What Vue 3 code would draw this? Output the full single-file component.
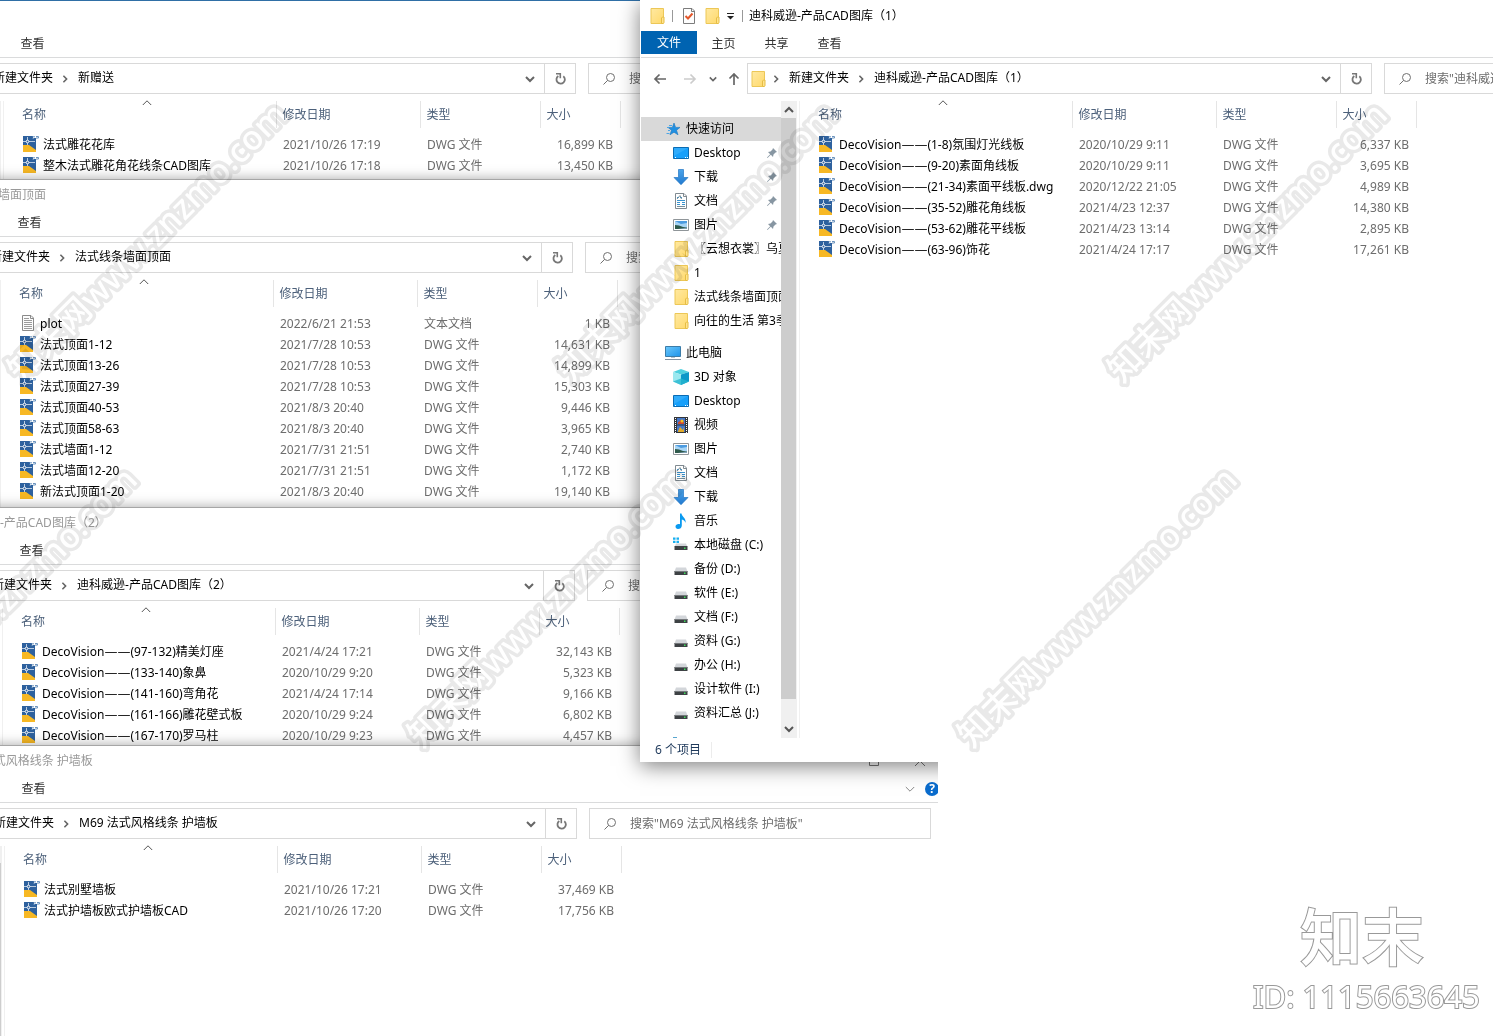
<script setup>
const dwg = (name, date, size) => ({ name, date, size, type: 'DWG 文件', icon: 'dwg' })

const windows = [
  {
    id: 'gift', left: -156, top: 0, folder: '新赠送', accent: true,
    files: [
      dwg('法式雕花花库', '2021/10/26 17:19', '16,899 KB'),
      dwg('整木法式雕花角花线条CAD图库', '2021/10/26 17:18', '13,450 KB'),
    ],
  },
  {
    id: 'ceiling', left: -159, top: 179, folder: '法式线条墙面顶面', title: true,
    files: [
      { name: 'plot', date: '2022/6/21 21:53', size: '1 KB', type: '文本文档', icon: 'txt' },
      dwg('法式顶面1-12', '2021/7/28 10:53', '14,631 KB'),
      dwg('法式顶面13-26', '2021/7/28 10:53', '14,899 KB'),
      dwg('法式顶面27-39', '2021/7/28 10:53', '15,303 KB'),
      dwg('法式顶面40-53', '2021/8/3 20:40', '9,446 KB'),
      dwg('法式顶面58-63', '2021/8/3 20:40', '3,965 KB'),
      dwg('法式墙面1-12', '2021/7/31 21:51', '2,740 KB'),
      dwg('法式墙面12-20', '2021/7/31 21:51', '1,172 KB'),
      dwg('新法式顶面1-20', '2021/8/3 20:40', '19,140 KB'),
    ],
  },
  {
    id: 'deco2', left: -157, top: 507, folder: '迪科威逊-产品CAD图库（2）', title: true,
    files: [
      dwg('DecoVision——(97-132)精美灯座', '2021/4/24 17:21', '32,143 KB'),
      dwg('DecoVision——(133-140)象鼻', '2020/10/29 9:20', '5,323 KB'),
      dwg('DecoVision——(141-160)弯角花', '2021/4/24 17:14', '9,166 KB'),
      dwg('DecoVision——(161-166)雕花壁式板', '2020/10/29 9:24', '6,802 KB'),
      dwg('DecoVision——(167-170)罗马柱', '2020/10/29 9:23', '4,457 KB'),
    ],
  },
  {
    id: 'm69', left: -155, top: 745, folder: 'M69 法式风格线条 护墙板', title: true, controls: true, thumb: true,
    files: [
      dwg('法式别墅墙板', '2021/10/26 17:21', '37,469 KB'),
      dwg('法式护墙板欧式护墙板CAD', '2021/10/26 17:20', '17,756 KB'),
    ],
  },
  {
    id: 'deco1', left: 640, top: 0, folder: '迪科威逊-产品CAD图库（1）', title: true, active: true, thumb: true,
    files: [
      dwg('DecoVision——(1-8)氛围灯光线板', '2020/10/29 9:11', '6,337 KB'),
      dwg('DecoVision——(9-20)素面角线板', '2020/10/29 9:11', '3,695 KB'),
      dwg('DecoVision——(21-34)素面平线板.dwg', '2020/12/22 21:05', '4,989 KB'),
      dwg('DecoVision——(35-52)雕花角线板', '2021/4/23 12:37', '14,380 KB'),
      dwg('DecoVision——(53-62)雕花平线板', '2021/4/23 13:14', '2,895 KB'),
      dwg('DecoVision——(63-96)饰花', '2021/4/24 17:17', '17,261 KB'),
    ],
  },
]

const layers = [
  { id: 'back', windows: windows.filter((w) => !w.active) },
  { id: 'front', windows: windows.filter((w) => w.active) },
]

const navGroups = [
  {
    label: '快速访问', icon: 'star', selected: true,
    items: [
      { label: 'Desktop', icon: 'desktop', pin: true },
      { label: '下载', icon: 'download', pin: true },
      { label: '文档', icon: 'document', pin: true },
      { label: '图片', icon: 'picture', pin: true },
      { label: '〖云想衣裳〗乌夏', icon: 'folder' },
      { label: '1', icon: 'folder' },
      { label: '法式线条墙面顶面', icon: 'folder' },
      { label: '向往的生活 第3季', icon: 'folder' },
    ],
  },
  {
    label: '此电脑', icon: 'pc',
    items: [
      { label: '3D 对象', icon: 'cube' },
      { label: 'Desktop', icon: 'desktop' },
      { label: '视频', icon: 'video' },
      { label: '图片', icon: 'picture' },
      { label: '文档', icon: 'document' },
      { label: '下载', icon: 'download' },
      { label: '音乐', icon: 'music' },
      { label: '本地磁盘 (C:)', icon: 'sysdrive' },
      { label: '备份 (D:)', icon: 'drive' },
      { label: '软件 (E:)', icon: 'drive' },
      { label: '文档 (F:)', icon: 'drive' },
      { label: '资料 (G:)', icon: 'drive' },
      { label: '办公 (H:)', icon: 'drive' },
      { label: '设计软件 (I:)', icon: 'drive' },
      { label: '资料汇总 (J:)', icon: 'drive' },
    ],
  },
]

const watermarks = [
  [22, 384], [572, 384], [1122, 384],
  [-128, 749], [422, 749], [972, 749],
]

const nameParts = (name) => name.split(/(——)/)
</script>

<template>
  <main class="desktop">
    <svg class="defs" aria-hidden="true">
      <linearGradient id="g-folder" x1="0" y1="0" x2="1" y2="1"><stop offset="0" stop-color="#ffe9a2" /><stop offset="1" stop-color="#ffd96b" /></linearGradient>
      <linearGradient id="g-screen" x1="0" y1="0" x2="1" y2="1"><stop offset="0" stop-color="#6cc8fb" /><stop offset="1" stop-color="#1c93ea" /></linearGradient>
      <linearGradient id="g-arrow" x1="0" y1="0" x2="0" y2="1"><stop offset="0" stop-color="#4ba4ea" /><stop offset="1" stop-color="#2179cf" /></linearGradient>
      <symbol id="i-dwg" viewBox="0 0 16 16">
        <path d="M0 0H13V16H0Z" fill="#2e619e" />
        <path d="M0 9H6L13 14V16H0Z" fill="#f7b824" />
        <path d="M8 0H13V3L16 2V1H14V0Z" fill="#e9f0f7" />
        <path d="M10 0H16V2H10Z" fill="#fff" />
        <path d="M9.500 .8H12M13 .5H15.500V2H13M9.500 2.500H11" stroke="#6d94bf" fill="none" />
        <path d="M0 5.500H3.200M6 5.500H12M4.500 1V4M4.500 7V9" stroke="#b9cbe0" fill="none" />
        <circle cx="4.500" cy="5.500" r="1.300" fill="#2e619e" stroke="#fff" />
      </symbol>
      <symbol id="i-txt" viewBox="0 0 16 16">
        <path d="M2.500.5H11L13.500 3V15.500H2.500Z" fill="#fcfcfc" stroke="#8b8b8b" />
        <path d="M10.500.5V3.500H13.500" fill="none" stroke="#8b8b8b" />
        <path d="M4 3.500H9M4 5.500H12M4 7.500H12M4 9.500H12M4 11.500H12M4 13.500H12" stroke="#9b9b9b" />
      </symbol>
      <symbol id="i-folder" viewBox="0 0 16 16">
        <path d="M2 .5H14.500V15.500H2Z" fill="url(#g-folder)" stroke="#ecc757" />
        <path d="M12.500 15.500V10L13.500 9H15V14.500L14 15.500Z" fill="#ffe48e" stroke="#e6bd45" />
      </symbol>
      <symbol id="i-star" viewBox="0 0 16 16">
        <path d="M9 2L10.600 6.400H15L11.500 9.200L13 13.800L9 11.200L5 13.800L6.500 9.200L3 6.400H7.400Z" fill="#2090e2" stroke="#1b76bd" stroke-width=".6" />
        <path d="M4 4.500H7M2 6.500H4M3 9.500H5M1.500 12.500H4.500" stroke="#4aa6e8" />
      </symbol>
      <symbol id="i-desktop" viewBox="0 0 16 16">
        <path d="M.5 2.500H15.500V13.500H.5Z" fill="#17a0fb" stroke="#0a6cb4" />
        <path d="M1 3H15L1 11Z" fill="#3fb2fb" opacity=".6" />
        <path d="M2 12.500H3M12 12.500H13M14 12.500H15" stroke="#fff" />
      </symbol>
      <symbol id="i-download" viewBox="0 0 16 16">
        <path d="M5.500.5H10.500V8.500H15L8 15.700L1 8.500H5.500Z" fill="url(#g-arrow)" stroke="#2377c4" stroke-width=".7" />
      </symbol>
      <symbol id="i-document" viewBox="0 0 16 16">
        <path d="M2.500.5H11L13.500 3V15.500H2.500Z" fill="#fff" stroke="#808a91" />
        <path d="M10.500.5V3.500H13.500" fill="none" stroke="#808a91" />
        <path d="M4 4.500H6M7 4.500H9M4 7.500H12M4 9.500H7M9 9.500H12M4 11.500H7M9 11.500H12" stroke="#3a94cf" />
        <path d="M4 6L7 2.500L8.500 6M4 13.500H12" stroke="#78909c" fill="none" />
      </symbol>
      <symbol id="i-picture" viewBox="0 0 16 16">
        <path d="M.5 2.500H15.500V13.500H.5Z" fill="#fff" stroke="#8f9599" />
        <path d="M2 4H14V12H2Z" fill="#a7d4f5" />
        <path d="M2 4H14V6L8 7Z" fill="#4c9be0" />
        <path d="M2 8L6 8.500L10 10L14 10.500V12H2Z" fill="#2e5a4b" />
        <path d="M5 12L14 10.500V12Z" fill="#7fa0b4" />
      </symbol>
      <symbol id="i-pc" viewBox="0 0 16 16">
        <path d="M.5 1.500H15.500V11.500H.5Z" fill="url(#g-screen)" stroke="#3c7ca8" />
        <path d="M6 12H10V13H6Z" fill="#b4c4d0" />
        <path d="M0 14.500H16" stroke="#8293a3" />
      </symbol>
      <symbol id="i-cube" viewBox="0 0 16 16">
        <path d="M0 3L8 0L16 3L8 5.500Z" fill="#4fd0de" />
        <path d="M0 3L8 5.500V16L0 12.500Z" fill="#9be8ef" />
        <path d="M16 3L8 5.500V16L16 12.500Z" fill="#0d98c8" />
        <path d="M0 12.500L8 9.500L16 12.500L8 16Z" fill="#25b7cf" opacity=".8" />
      </symbol>
      <symbol id="i-video" viewBox="0 0 16 16">
        <path d="M1 0H15V16H1Z" fill="#34363a" />
        <path d="M4 1H12V7.500H4ZM4 8.500H12V15H4Z" fill="#4577c8" />
        <path d="M5 5.500L8 3L11 5V7H5Z" fill="#d14a2e" />
        <circle cx="9" cy="4" r="1.500" fill="#f3c321" />
        <path d="M5 14L7 10L10 13L11 10V15H5Z" fill="#e2ab2b" />
        <path d="M2.500 1V16M13.500 1V16" stroke="#fff" stroke-dasharray="1 1" />
      </symbol>
      <symbol id="i-music" viewBox="0 0 16 16">
        <path d="M7 .5H8.500C9 4 13.500 5 12.500 10C12 8 11 7 8.800 6.500V12.500C8.800 15 7 16 5 16C3.500 16 2.500 15 2.500 13.600C2.500 11.500 5 10.500 7 11.300Z" fill="#0a9af0" />
      </symbol>
      <symbol id="i-drive" viewBox="0 0 16 16">
        <path d="M3 6.500H13L14.500 10.500H1.500Z" fill="#d3d6da" />
        <path d="M1.500 10H14.500V14H1.500Z" fill="#3d4144" />
        <path d="M1.500 10H14.500V11H1.500Z" fill="#74787b" />
        <path d="M11 11.500H12.500V13H11Z" fill="#3fe05b" />
      </symbol>
      <symbol id="i-sysdrive" viewBox="0 0 16 16">
        <path d="M0 .5H2.500V2.800H0ZM3.500.5H6V2.800H3.500ZM0 3.800H2.500V6H0ZM3.500 3.800H6V6H3.500Z" fill="#19aff0" />
        <path d="M3 6.500H13L14.500 10H1.500Z" fill="#d3d6da" />
        <path d="M1.500 9H14.500V13H1.500Z" fill="#3d4144" />
        <path d="M11 10.500H12.500V12H11Z" fill="#3fe05b" />
      </symbol>
      <symbol id="i-network" viewBox="0 0 16 16">
        <path d="M2 0H6V4H2Z" fill="#58a6cf" />
      </symbol>
      <symbol id="i-pin" viewBox="0 0 12 12">
        <path d="M7 1L11 5L9.500 5.500L7.500 7.500L7 10L4.800 7.800L1.500 11L1 10.500L4.200 7.200L2 5L4.500 4.500L6.500 2.500Z" fill="#8796a2" />
      </symbol>
      <symbol id="i-check" viewBox="0 0 16 16">
        <path d="M2.500.5H11L13.500 3V15.500H2.500Z" fill="#fdfdfd" stroke="#7c7c7c" />
        <path d="M10.500.5V3.500H13.500" fill="none" stroke="#7c7c7c" />
        <path d="M4.500 8L7 10.500L11.500 5.500" fill="none" stroke="#e3572b" stroke-width="2" />
      </symbol>
      <symbol id="i-customize" viewBox="0 0 8 8">
        <path d="M0 1.500H7" stroke="#222" /><path d="M0 4H7L3.500 7.500Z" fill="#222" />
      </symbol>
      <symbol id="i-back" viewBox="0 0 14 14">
        <path d="M13 7H2M6.500 2.500L2 7L6.500 11.500" fill="none" stroke="currentColor" stroke-width="1.700" />
      </symbol>
      <symbol id="i-chevron" viewBox="0 0 10 10">
        <path d="M1 3L5 7L9 3" fill="none" stroke="currentColor" stroke-width="2" />
      </symbol>
      <symbol id="i-thin" viewBox="0 0 10 10">
        <path d="M.8 3L5 7.200L9.200 3" fill="none" stroke="currentColor" />
      </symbol>
      <symbol id="i-refresh" viewBox="0 0 12 12">
        <path d="M9.300 3.200A4.200 4.200 0 1 1 4.300 3" fill="none" stroke="#777" stroke-width="1.800" />
        <path d="M2 .8H6.300V5.200" fill="none" stroke="#777" stroke-width="1.600" />
      </symbol>
      <symbol id="i-search" viewBox="0 0 12 12">
        <circle cx="7.500" cy="4.500" r="4" fill="none" stroke="#707070" /><path d="M4.600 7.400L.5 11.500" stroke="#707070" />
      </symbol>
    </svg>

    <div v-for="layer in layers" :key="layer.id" class="layer" :class="layer.id">
      <section
        v-for="win in layer.windows" :key="win.id"
        class="window" :class="{ active: win.active, accent: win.accent }"
        :style="{ left: win.left + 'px', top: win.top + 'px' }"
      >
        <header class="titlebar">
          <div v-if="win.active" class="quick">
            <svg class="ico"><use href="#i-folder" /></svg>
            <i class="bar"></i>
            <svg class="ico"><use href="#i-check" /></svg>
            <svg class="ico"><use href="#i-folder" /></svg>
            <svg class="ico8"><use href="#i-customize" /></svg>
            <i class="bar"></i>
          </div>
          <h2 v-if="win.title" class="title">{{ win.folder }}</h2>
          <div v-if="win.controls" class="caption">
            <button aria-label="Maximize"><svg width="10" height="10"><path d="M.5.5H9.500V9.500H.5Z" fill="none" stroke="#777" /></svg></button>
            <button aria-label="Close"><svg width="10" height="10"><path d="M0 0L10 10M10 0L0 10" stroke="#777" /></svg></button>
          </div>
        </header>

        <nav class="tabs">
          <template v-if="win.active">
            <button class="tab file">文件</button>
            <button class="tab">主页</button>
            <button class="tab">共享</button>
          </template>
          <button class="tab view">查看</button>
          <span v-if="win.controls" class="ribbon-end">
            <svg class="ico10"><use href="#i-thin" /></svg>
            <button class="help" aria-label="Help">?</button>
          </span>
        </nav>

        <div class="navbar">
          <div class="arrows">
            <template v-if="win.active">
              <button aria-label="Back"><svg class="ico14"><use href="#i-back" /></svg></button>
              <button class="off" aria-label="Forward"><svg class="ico14 flip"><use href="#i-back" /></svg></button>
              <button class="recent" aria-label="Recent"><svg class="ico8"><use href="#i-chevron" /></svg></button>
              <button aria-label="Up"><svg class="ico14 up"><use href="#i-back" /></svg></button>
            </template>
          </div>
          <div class="address">
            <svg v-if="win.active" class="ico addr-folder"><use href="#i-folder" /></svg>
            <svg v-if="win.active" class="ico8 right"><use href="#i-chevron" /></svg>
            <a class="crumb first" href="#">新建文件夹</a>
            <svg class="ico8 right"><use href="#i-chevron" /></svg>
            <a class="crumb" href="#">{{ win.folder }}</a>
            <button class="drop" aria-label="History"><svg class="ico10"><use href="#i-chevron" /></svg></button>
            <button class="refresh" aria-label="Refresh"><svg class="ico12"><use href="#i-refresh" /></svg></button>
          </div>
          <label class="search">
            <svg class="ico12"><use href="#i-search" /></svg>
            <input type="search" :placeholder="`搜索&quot;${win.folder}&quot;`" aria-label="搜索" />
          </label>
        </div>

        <div class="body">
          <aside class="pane">
            <div class="tree">
              <template v-if="win.active">
                <ul v-for="group in navGroups" :key="group.label">
                  <li class="root" :class="{ selected: group.selected }">
                    <svg class="ico"><use :href="'#i-' + group.icon" /></svg>{{ group.label }}
                  </li>
                  <li v-for="item in group.items" :key="item.label">
                    <svg class="ico"><use :href="'#i-' + item.icon" /></svg>{{ item.label }}
                    <svg v-if="item.pin" class="ico12 pin"><use href="#i-pin" /></svg>
                  </li>
                </ul>
                <svg class="ico net"><use href="#i-network" /></svg>
              </template>
            </div>
            <div class="scroll">
              <svg class="ico10 flip"><use href="#i-chevron" /></svg>
              <div v-if="win.thumb" class="thumb"></div>
              <svg v-if="win.active" class="ico10"><use href="#i-chevron" /></svg>
            </div>
          </aside>
          <table class="files">
            <colgroup><col class="c-name" /><col class="c-date" /><col class="c-type" /><col class="c-size" /></colgroup>
            <thead>
              <tr>
                <th scope="col">名称<svg class="ico10 sort"><use href="#i-thin" /></svg></th>
                <th scope="col">修改日期</th>
                <th scope="col">类型</th>
                <th scope="col">大小</th>
              </tr>
            </thead>
            <tbody>
              <tr v-for="file in win.files" :key="file.name">
                <td class="name">
                  <svg class="ico"><use :href="'#i-' + file.icon" /></svg>
                  <span v-for="(part, i) in nameParts(file.name)" :key="i" :class="{ dash: part === '——' }">{{ part }}</span>
                </td>
                <td>{{ file.date }}</td>
                <td>{{ file.type }}</td>
                <td class="size">{{ file.size }}</td>
              </tr>
            </tbody>
          </table>
        </div>

        <footer v-if="win.active" class="status"><span>6 个项目</span></footer>
      </section>
      <div v-if="layer.id === 'back'" class="cast"></div>
    </div>

    <svg class="marks" aria-hidden="true">
      <text v-for="([x, y], i) in watermarks" :key="i" :transform="`translate(${x} ${y}) rotate(-45)`">知末网www.znzmo.com</text>
    </svg>

    <div class="brand">
      <svg class="logo" viewBox="0 0 126 62"><text x="0" y="54">知末</text></svg>
      <svg class="code" viewBox="0 0 230 34"><text x="0" y="28">ID: 1115663645</text></svg>
    </div>
  </main>
</template>

<style>
body {
  background: #fff;
}
</style>

<style scoped>
.desktop {
  position: relative;
  height: 100vh;
  overflow: hidden;
  background: #fff;
  font-family: "Noto Sans", "Noto Sans CJK SC", sans-serif;
  font-size: 12px;
  line-height: 16px;
  color: #000;
}
.defs {
  position: absolute;
  width: 0;
  height: 0;
}
.layer {
  position: absolute;
  inset: 0;
  overflow: hidden;
}
.layer.back {
  right: auto;
  width: 938px;
}
.window {
  position: absolute;
  bottom: 0;
  display: flex;
  flex-direction: column;
  box-sizing: border-box;
  width: 1098px;
  border-top: 1px solid #a6a6a6;
  background: #fff;
  box-shadow: 0 0 12px rgba(0, 0, 0, .35);
}
.window.accent {
  border-top-color: #2f6fa6;
}
.window.active {
  bottom: auto;
  height: 762px;
  border-top-color: #fff;
  border-left: 1px solid #fff;
  box-shadow: none;
}
.cast {
  position: absolute;
  left: 640px;
  top: 0;
  width: 1098px;
  height: 762px;
  box-shadow: 0 4px 20px rgba(0, 0, 0, .5);
}
button {
  display: flex;
  align-items: center;
  justify-content: center;
  padding: 0;
  border: 0;
  background: none;
  font: inherit;
  color: inherit;
}
svg {
  display: block;
  flex: none;
}
.ico { width: 16px; height: 16px; }
.ico14 { width: 14px; height: 14px; }
.ico12 { width: 12px; height: 12px; }
.ico10 { width: 10px; height: 10px; }
.ico8 { width: 8px; height: 8px; }
.flip { transform: rotate(180deg); }
.up { transform: rotate(90deg); }
.right { transform: rotate(-90deg); color: #666; }

.titlebar {
  display: flex;
  align-items: center;
  height: 30px;
  padding-left: 109px;
}
.active .titlebar {
  padding-left: 8px;
}
.quick {
  display: flex;
  align-items: center;
  gap: 7px;
  margin-right: 6px;
}
.bar {
  width: 1px;
  height: 12px;
  background: #999;
}
.quick .bar + .ico { margin-left: 1px; }
.title {
  margin: 0;
  font: inherit;
  color: #999;
}
.active .title {
  color: #000;
}
.caption {
  display: flex;
  margin-left: auto;
}
.caption button {
  width: 46px;
  height: 30px;
}

.tabs {
  display: flex;
  height: 26px;
  border-bottom: 1px solid #dadbdc;
  color: #333;
}
.tab {
  width: 53px;
  height: 25px;
}
.tab.file {
  width: 56px;
  height: 23px;
  background: #0063b1;
  color: #fff;
}
.tab.view {
  margin-left: 162px;
}
.active .tab.view {
  margin-left: 0;
}
.ribbon-end {
  display: flex;
  align-items: center;
  gap: 10px;
  margin-left: auto;
  padding-right: 4px;
  color: #888;
}
.help {
  width: 14px;
  height: 14px;
  border-radius: 50%;
  background: #0a6ccd;
  color: #fff;
  font-weight: 700;
}

.navbar {
  display: flex;
  height: 31px;
  margin: 5px 12px 7px 0;
}
.arrows {
  display: flex;
  align-items: center;
  width: 107px;
  color: #666;
}
.active .arrows {
  box-sizing: border-box;
  width: 106px;
  padding-left: 12px;
  gap: 16px;
}
.arrows .off { color: #ccc; }
.arrows .recent { margin: 0 -6px 0 -4px; }
.address {
  display: flex;
  flex: 1;
  align-items: center;
  box-sizing: border-box;
  margin-right: 12px;
  border: 1px solid #d9d9d9;
}
.addr-folder {
  margin: 0 6px 0 2px;
}
.crumb {
  padding: 0 8px 2px 9px;
  color: #000;
  text-decoration: none;
}
.crumb.first {
  margin-left: 32px;
}
.active .crumb.first {
  margin-left: 0;
}
.drop {
  width: 28px;
  height: 29px;
  margin-left: auto;
  color: #666;
}
.refresh {
  width: 31px;
  height: 29px;
  border-left: 1px solid #d9d9d9;
}
.search {
  display: flex;
  align-items: center;
  box-sizing: border-box;
  width: 342px;
  padding-left: 14px;
  gap: 14px;
  border: 1px solid #d9d9d9;
}
.search input {
  flex: 1;
  min-width: 0;
  padding: 0;
  border: 0;
  outline: 0;
  background: none;
  font: inherit;
}
.search input::placeholder {
  color: #6d6d6d;
  opacity: 1;
}

.body {
  display: flex;
  flex: 1;
  min-height: 0;
  align-items: flex-start;
}
.pane {
  display: flex;
  align-self: stretch;
  box-sizing: border-box;
  width: 160px;
  border-right: 1px solid #f0f0f0;
  padding-right: 2px;
}
.active .pane {
  width: 159px;
}
.tree {
  flex: 1;
  min-width: 0;
  overflow: hidden;
  padding-top: 16px;
}
.tree ul {
  margin: 0 0 8px;
  padding: 0;
  list-style: none;
}
.tree li {
  position: relative;
  display: flex;
  align-items: center;
  gap: 5px;
  height: 24px;
  padding-left: 32px;
  white-space: nowrap;
}
.tree li.root {
  padding-left: 24px;
}
.tree li.selected {
  background: #d9d9d9;
}
.pin {
  position: absolute;
  right: 3px;
  top: 6px;
}
.net {
  margin: 12px 0 0 30px;
}
.scroll {
  display: flex;
  flex-direction: column;
  align-items: center;
  box-sizing: border-box;
  width: 16px;
  padding-top: 4px;
  background: #f0f0f0;
  color: #555;
}
.active .scroll {
  padding-bottom: 4px;
}
.thumb {
  flex: 1;
  width: 15px;
  margin: 3px 1px 0 0;
  background: #cdcdcd;
}
.active .thumb {
  margin-bottom: 25px;
}

.files {
  width: 616px;
  border-collapse: collapse;
  table-layout: fixed;
  color: #6d6d6d;
}
.c-name { width: 272px; }
.c-date { width: 144px; }
.c-type { width: 120px; }
.c-size { width: 80px; }
.files th {
  position: relative;
  box-sizing: border-box;
  height: 27px;
  padding: 0 0 0 6px;
  border-right: 1px solid #e5e5e5;
  font-weight: 400;
  text-align: left;
  color: #4c607a;
}
.files th:first-child {
  padding-left: 18px;
}
.sort {
  position: absolute;
  left: 138px;
  top: -3px;
  color: #555;
  transform: rotate(180deg);
}
.files tbody::before {
  content: "";
  display: block;
  height: 6px;
}
.files td {
  height: 21px;
  padding: 0 7px;
  white-space: nowrap;
}
.files td.name {
  display: flex;
  align-items: center;
  padding-left: 19px;
  color: #000;
}
.name .ico {
  margin: 0 4px 1px 0;
}
.dash {
  font-family: "DejaVu Sans", sans-serif;
  font-size: 13px;
}
.files td.size {
  text-align: right;
}
.status {
  display: flex;
  align-items: center;
  height: 24px;
  padding-left: 14px;
  color: #1e395b;
}
.status span {
  padding-right: 10px;
  border-right: 1px solid #ececec;
}

.marks {
  position: absolute;
  inset: 0;
  width: 100%;
  height: 100%;
  mix-blend-mode: multiply;
  pointer-events: none;
}
.marks text {
  font-size: 34px;
  font-weight: 500;
  fill: #fff;
  stroke: #e9e9e9;
  stroke-width: 7px;
  stroke-linejoin: round;
  paint-order: stroke;
}
.brand {
  position: absolute;
  right: 10px;
  bottom: 22px;
  display: flex;
  flex-direction: column;
  width: 230px;
}
.brand text {
  fill: #fff;
  stroke: #999;
  stroke-width: 2px;
  paint-order: stroke;
}
.logo {
  width: 126px;
  height: 62px;
  margin-left: 47px;
  overflow: visible;
}
.logo text {
  font-size: 62px;
  font-weight: 500;
}
.code {
  width: 230px;
  height: 34px;
  margin-top: 11px;
  overflow: visible;
}
.code text {
  font-size: 31px;
}
</style>
